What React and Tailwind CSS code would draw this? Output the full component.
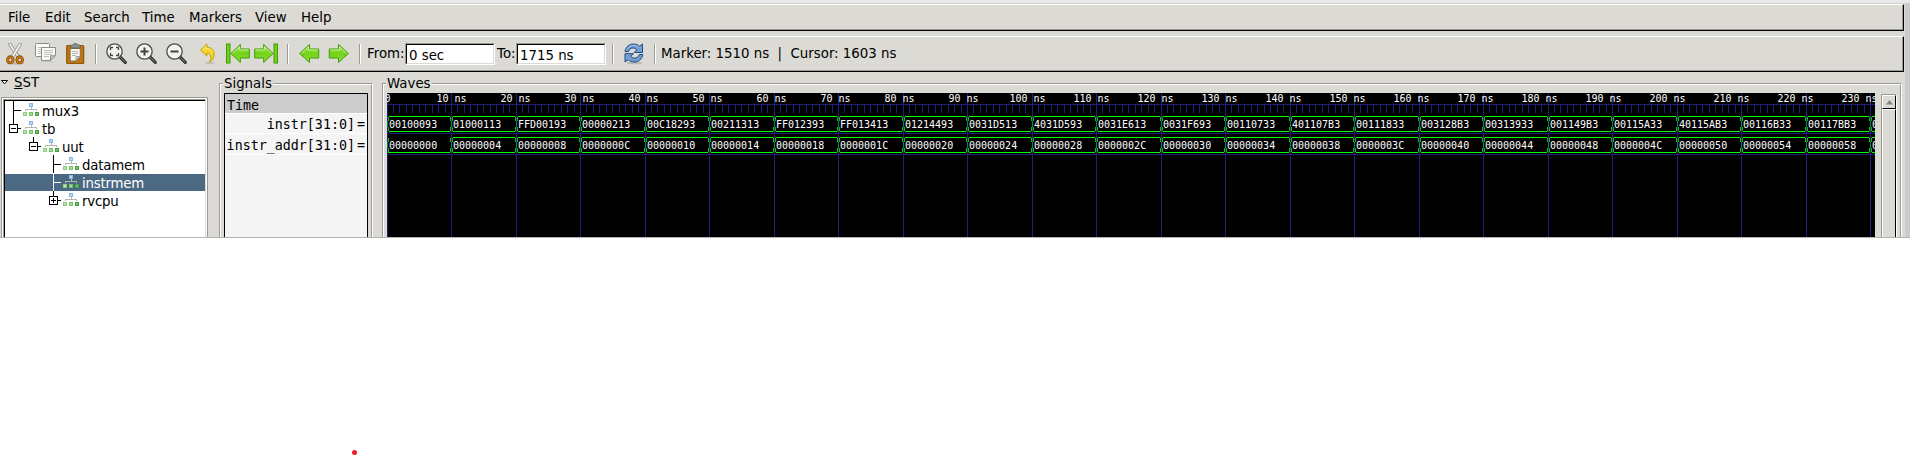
import React from "react";

const MENU = [
  ["File", "w-[37px]"],
  ["Edit", "w-[39px]"],
  ["Search", "w-[58px]"],
  ["Time", "w-[47px]"],
  ["Markers", "w-[66px]"],
  ["View", "w-[46px]"],
  ["Help", "w-[40px]"],
];

const INSTR = [
  "00100093", "01000113", "FFD00193", "00000213", "00C18293", "00211313",
  "FF012393", "FF013413", "01214493", "0031D513", "4031D593", "0031E613",
  "0031F693", "00110733", "401107B3", "00111833", "003128B3", "00313933",
  "001149B3", "00115A33", "40115AB3", "00116B33", "00117BB3", "0",
];
const ADDR = INSTR.map((_, i) => (i === 23 ? "0" : (i * 4).toString(16).toUpperCase().padStart(8, "0")));

const lineX = (k) => Math.floor(64.5 * k);

function Cut() {
  return (
    <svg width="20" height="22" viewBox="0 0 20 22" fill="none">
      <ellipse cx="10" cy="20.5" rx="9" ry="1.2" fill="#b9b8b2" />
      <path d="M4 1.5 L12.5 14" stroke="#8b8d88" strokeWidth="3.4" strokeLinecap="round" />
      <path d="M4 1.5 L12.5 14" stroke="#f4f4f2" strokeWidth="1.8" strokeLinecap="round" />
      <path d="M14 1.5 L6.5 14" stroke="#8b8d88" strokeWidth="3.4" strokeLinecap="round" />
      <path d="M14 1.5 L6.5 14" stroke="#f4f4f2" strokeWidth="1.8" strokeLinecap="round" />
      <ellipse cx="4.3" cy="16.8" rx="2.8" ry="3" stroke="#8f4f02" strokeWidth="3" />
      <ellipse cx="4.3" cy="16.8" rx="2.8" ry="3" stroke="#c97a1c" strokeWidth="1.3" />
      <ellipse cx="13.7" cy="16.8" rx="2.8" ry="3" stroke="#8f4f02" strokeWidth="3" />
      <ellipse cx="13.7" cy="16.8" rx="2.8" ry="3" stroke="#c97a1c" strokeWidth="1.3" />
    </svg>
  );
}

function Copy() {
  return (
    <svg width="22" height="22" viewBox="0 0 22 22" fill="none">
      <rect x="0.5" y="0.5" width="14" height="13" rx="0.8" fill="#fafafa" stroke="#8a8c87" />
      <path d="M3 4.5h9M3 6.5h9M3 8.5h4M3 10.5h3" stroke="#bfc0bc" />
      <path d="M6.5 4.5h14v8l-5 5h-9z" fill="#f8f8f7" stroke="#8a8c87" />
      <path d="M9 7.5h9M9 9.5h9M9 11.5h8M9 13.5h5" stroke="#bfc0bc" />
      <path d="M20 12.8l-4.5 4.5v-4.5z" fill="#d5d5d2" stroke="#8a8c87" />
      <path d="M7 18.8h12" stroke="#c4c3bd" />
    </svg>
  );
}

function Paste() {
  return (
    <svg width="20" height="22" viewBox="0 0 20 22" fill="none">
      <rect x="0.7" y="2.5" width="17" height="18" rx="1" fill="#bd7513" stroke="#8f5902" strokeWidth="1.2" />
      <path d="M4.2 5.5h10v8l-4 4.5h-6z" fill="#f7f7f6" stroke="#85612a" strokeWidth="0.8" />
      <path d="M14 13.5h-4v4.3z" fill="#c8c8c5" stroke="#8a8c87" strokeWidth="0.7" />
      <path d="M6 8.5h6M6 10.5h6M6 12.5h4" stroke="#b5b6b2" />
      <path d="M4.5 5V2.8q0-.8 1-.8h1.3Q7 .5 9.3.5T12 2h1.300q1 0 1 .8V5z" fill="#8d8f88" stroke="#5c5e59" strokeWidth="0.8" />
    </svg>
  );
}

function Magnifier({ kind }) {
  return (
    <svg width="22" height="22" viewBox="0 0 22 22" fill="none">
      <path d="M14 14L19.300 19.300" stroke="#2e3436" strokeWidth="3.200" strokeLinecap="round" />
      <path d="M14.500 14.500L19 19" stroke="#7d817f" strokeWidth="1" strokeLinecap="round" />
      <circle cx="8.500" cy="8.500" r="7.600" fill="#f1f1ef" stroke="#555753" strokeWidth="1.500" />
      <circle cx="8.500" cy="8.500" r="6.300" stroke="#ffffff" strokeWidth="0.9" />
      {kind === "in" && <path d="M4.500 8.500h8M8.500 4.500v8" stroke="#3f4341" strokeWidth="2" />}
      {kind === "out" && <path d="M4.500 8.500h8" stroke="#3f4341" strokeWidth="2" />}
      {kind === "fit" && (
        <path d="M4.500 7V4.500H7M10 4.500h2.500V7M12.500 10v2.500H10M7 12.500H4.500V10" stroke="#3f4341" strokeWidth="1.300" />
      )}
    </svg>
  );
}

function Undo() {
  return (
    <svg width="17" height="22" viewBox="-0.8 0 17 22" fill="none">
      <ellipse cx="10" cy="20" rx="5" ry="1.200" fill="#c3c2bb" />
      <path
        d="M0.800 7L7 1v3.300c5 0 7.400 3 7.400 7.200 0 3.500-2 6.300-4.800 7.500 1.200-1.700 1.600-3.200 1.500-5-.1-2.400-1.500-3.700-4.100-3.700V13z"
        fill="#f6d52c"
        stroke="#c4a000"
        strokeWidth="1"
        strokeLinejoin="round"
      />
      <path d="M2.500 7L6 3.700v1.700c4 0 6 1.500 7 4" stroke="#fff3a0" strokeWidth="0.800" />
    </svg>
  );
}

function Arrow({ dir = "left", bar = false }) {
  return (
    <svg
      width={bar ? 24 : 21}
      height="22"
      viewBox={bar ? "-4 0 24 22" : "0 0 21 22"}
      fill="none"
      className={dir === "right" ? "-scale-x-100" : ""}
    >
      <defs>
        <linearGradient id="greenFill" x1="0" y1="0" x2="0" y2="1">
          <stop offset="0" stopColor="#a9e866" />
          <stop offset="0.5" stopColor="#73d216" />
          <stop offset="1" stopColor="#8ee03c" />
        </linearGradient>
      </defs>
      {bar && <rect x="-3.500" y="1" width="3.500" height="19" fill="#73d216" stroke="#3f9a06" />}
      <path
        d={bar ? "M0.900 10.500L10.300 1.500V6H19.300v9h-9v4.500z" : "M0.700 10.500L10.500 1.500V6H19.700v9h-9.200v4.500z"}
        fill="url(#greenFill)"
        stroke="#3f9a06"
        strokeLinejoin="round"
      />
      <path d="M2.500 10.300L9.600 3.800V7h9" stroke="#cdf5a0" strokeWidth="0.900" />
    </svg>
  );
}

function Refresh() {
  return (
    <svg width="22" height="22" viewBox="0 0 22 22" fill="none">
      <ellipse cx="10.500" cy="20" rx="8" ry="1.300" fill="#b9b9b5" />
      <g fill="#729fcf" stroke="#204a87" strokeWidth="1" strokeLinejoin="round">
        <path d="M1 8.500C1.700 3.500 5.500 1 9.500 1c2.500 0 4.500.8 6 2.300L18.500 1v8.500H10.200l2.600-2.700C11.500 5.500 10.300 5 9 5 6.500 5 5 6.300 4.500 8.500z" />
        <path d="M18.800 11.500c-.8 5-4.500 7.500-8.500 7.500-2.500 0-4.500-.8-6-2.300L1 19v-8.300h8.500l-2.700 2.600c1.200 1.200 2.400 1.800 3.800 1.800 2.500 0 4-1.300 4.600-3.600z" />
      </g>
      <path d="M2.800 7C4 3.800 6.500 2.300 9.500 2.300c2.300 0 4 .8 5.500 2.400" stroke="#adc9ea" strokeWidth="0.800" />
    </svg>
  );
}

function Sep() {
  return <div className="h-5 w-[2px] shrink-0 border-l border-[#9c9a93] bg-white" />;
}

function Slot({ w, children }) {
  return <div className={`${w} flex h-[22px] shrink-0 items-center`}>{children}</div>;
}

function Label({ children }) {
  return <span className="pl-px pt-px">{children}</span>;
}

function Entry({ children }) {
  return (
    <div className="h-[22px] w-[90px] shrink-0 border border-b-white border-l-[#9c9a93] border-r-white border-t-[#9c9a93]">
      <div className="h-5 border border-b-[#dcdad5] border-l-black border-r-[#dcdad5] border-t-black bg-white pl-[2px] leading-[21px]">
        {children}
      </div>
    </div>
  );
}

function Bar({ size, children }) {
  return (
    <div className={`${size} w-[1904px] shrink-0 border-b border-r border-t border-b-black border-r-black border-t-white`}>
      <div className="flex h-full items-center border-b border-r border-[#9c9a93]">{children}</div>
    </div>
  );
}

function ModuleIcon() {
  return (
    <svg width="16" height="14" viewBox="0 0 16 14" shapeRendering="crispEdges">
      <path d="M2.500 8V6.500h11V8M8.500 4v3" stroke="#b4b6b2" fill="none" />
      <rect x="6" y="0" width="4" height="4" fill="#86b5ea" />
      <rect x="7" y="1" width="2" height="2" fill="#bcd8f6" />
      <rect x="0" y="9" width="4" height="4" fill="#8ccf7d" />
      <rect x="1" y="10" width="2" height="2" fill="#b5e3a8" />
      <rect x="6" y="9" width="4" height="4" fill="#74c168" />
      <rect x="7" y="10" width="2" height="2" fill="#a5dc98" />
      <rect x="12" y="9" width="4" height="4" fill="#46a043" />
      <rect x="13" y="10" width="2" height="2" fill="#74c168" />
    </svg>
  );
}

const TREE = [
  { name: "mux3", pad: "pl-[3px]", d: "M5.500 0v18M5.500 9.500h7" },
  { name: "tb", pad: "pl-[3px]", d: "M5.500 0v5M9.500 9.500h3M1.500 5.500h8v8h-8zM3 9.500h5" },
  { name: "uut", pad: "pl-[23px]", d: "M5.500 0v5M9.500 9.500h3M1.500 5.500h8v8h-8zM3 9.500h5" },
  { name: "datamem", pad: "pl-[43px]", d: "M5.500 0v18M5.500 9.500h7" },
  { name: "instrmem", pad: "pl-[43px]", d: "M5.500 0v18M5.500 9.500h7", selected: true },
  { name: "rvcpu", pad: "pl-[43px]", d: "M5.500 0v5M9.500 9.500h3M1.500 5.500h8v8h-8zM3 9.500h5M5.500 7v5" },
];

function Tree() {
  return (
    <div className="ml-px mt-[8px] h-[141px] w-[207px] border-x border-t border-[#9c9a93]">
      <div className="h-full border-x border-t border-white">
        <div className="h-full border-l border-t border-r border-l-[#9c9a93] border-r-[#dcdad5] border-t-[#9c9a93]">
          <div className="h-full border-l border-t border-black bg-white">
            {TREE.map((n) => (
              <div
                key={n.name}
                className={`h-[18px] border-t border-white ${n.selected ? "bg-[#4b6983] text-white" : "text-black"}`}
              >
                <div className={`${n.pad} -mt-px flex h-[18px]`}>
                  <svg width="15" height="18" viewBox="0 0 15 18" fill="none" stroke="currentColor" shapeRendering="crispEdges">
                    <path d={n.d} />
                  </svg>
                  <div className="pt-[2px]"><ModuleIcon /></div>
                  <span className="pl-[3px] leading-[21px] tracking-[-0.2px]">{n.name}</span>
                </div>
              </div>
            ))}
          </div>
        </div>
      </div>
    </div>
  );
}

function Frame({ title, size, children }) {
  return (
    <div className={`${size} mt-[11px] shrink-0 border-l border-r border-t border-l-[#9c9a93] border-r-white border-t-[#9c9a93]`}>
      <div className="h-full border-l border-r border-t border-l-white border-r-[#9c9a93] border-t-white">
        <div className="-mt-[10px] ml-[2px] h-[18px] w-fit bg-[#dcdad5] px-px leading-[18px]">{title}</div>
        {children}
      </div>
    </div>
  );
}

function Row({ y, values }) {
  return (
    <g>
      {values.map((v, k) => {
        const a = lineX(k);
        const b = lineX(k + 1);
        const zero = k === 0 && values === ADDR;
        return (
          <g key={k}>
            <path
              d={zero ? `M${a + 1} ${y + 15.5}H${b - 1}` : `M${a + 2} ${y + 0.5}H${b - 1}M${a + 2} ${y + 15.5}H${b - 1}`}
              stroke="#00ff00"
            />
            <path
              d={`M${a + 1.5} ${y + 1}v4M${a + 1.5} ${y + 11}v4M${b - 0.5} ${y + 1}v4M${b - 0.5} ${y + 11}v4`}
              stroke="#00c800"
            />
            <path d={`M${a + 0.5} ${y + 5}v6`} stroke="#008a50" />
            <text x={a + 2} y={y + 12} fill="#ffffff">{v}</text>
          </g>
        );
      })}
      <path d={`M0 ${y + 17.5}H1488`} stroke="#20207c" />
    </g>
  );
}

function Waves() {
  return (
    <svg
      width="1488"
      height="145"
      viewBox="0 0 1488 145"
      fill="none"
      shapeRendering="crispEdges"
      className="block shrink-0 bg-black font-['DejaVu_Sans_Mono',monospace] text-[10px]"
    >
      {Array.from({ length: 24 }, (_, k) => (
        <path key={k} d={`M${lineX(k) + 0.5} 0V145`} stroke="#20207c" />
      ))}
      <path d="M0 11.500H1488" stroke="#20207c" />
      {Array.from({ length: 231 }, (_, n) => (
        <path key={n} d={`M${Math.floor(n * 6.45) + 0.5} 12v8`} stroke="#20207c" />
      ))}
      {Array.from({ length: 24 }, (_, k) => (
        <text key={k} x={k * 64 + 0.5} y="9" textAnchor="middle" fill="#ffffff">
          {k === 0 ? "0" : `${k * 10} ns`}
        </text>
      ))}
      <Row y={23} values={INSTR} />
      <Row y={44} values={ADDR} />
    </svg>
  );
}

export default function App() {
  return (
    <div className="flex h-[456px] w-[1910px] flex-col overflow-hidden bg-white font-['DejaVu_Sans',sans-serif] text-[13.33px] text-black">
      <div className="h-[3px] shrink-0 bg-[#e8e8e8]" />
      <div className="flex h-[235px] shrink-0 overflow-hidden border-b border-[#b4b3af] bg-[#cccccc]">
        <div className="flex w-[1905px] flex-col border-t border-[#d2d1cd] bg-[#dcdad5]">
          <Bar size="h-[27px]">
            <div className="flex h-[24px] pl-[8px] leading-[25px]">
              {MENU.map(([m, w]) => (
                <span key={m} className={w}>{m}</span>
              ))}
            </div>
          </Bar>
          <div className="h-[5px] shrink-0" />
          <Bar size="h-[36px]">
            <div className="flex items-center whitespace-pre pl-[6px]">
              <Slot w="w-[29px]"><Cut /></Slot>
              <Slot w="w-[31px]"><Copy /></Slot>
              <Slot w="w-[29px]"><Paste /></Slot>
              <Slot w="w-[11px]"><Sep /></Slot>
              <Slot w="w-[30px]"><Magnifier kind="fit" /></Slot>
              <Slot w="w-[30px]"><Magnifier kind="in" /></Slot>
              <Slot w="w-[33px]"><Magnifier kind="out" /></Slot>
              <Slot w="w-[27px]"><Undo /></Slot>
              <Slot w="w-[28px]"><Arrow bar /></Slot>
              <Slot w="w-[33px]"><Arrow bar dir="right" /></Slot>
              <Slot w="w-[12px]"><Sep /></Slot>
              <Slot w="w-[29px]"><Arrow /></Slot>
              <Slot w="w-[31px]"><Arrow dir="right" /></Slot>
              <Slot w="w-[7px]"><Sep /></Slot>
              <Slot w="w-[39px]"><Label>From:</Label></Slot>
              <Slot w="w-[92px]"><Entry>0 sec</Entry></Slot>
              <Slot w="w-[19px]"><span className="pt-px">To:</span></Slot>
              <Slot w="w-[96px]"><Entry>1715 ns</Entry></Slot>
              <Slot w="w-[12px]"><Sep /></Slot>
              <Slot w="w-[30px]"><Refresh /></Slot>
              <Slot w="w-[6px]"><Sep /></Slot>
              <Slot w="w-[260px]"><Label>{"Marker: 1510 ns  |  Cursor: 1603 ns"}</Label></Slot>
            </div>
          </Bar>
          <div className="flex h-[166px] shrink-0">
            <div className="w-[219px] shrink-0 pt-px">
              <div className="flex h-[16px] items-center">
                <svg width="14" height="14" viewBox="0 0 14 14" fill="none" stroke="#000000">
                  <path d="M1.500 6.500h6L4.500 9.800z" fill="#ffffff" />
                </svg>
                <span className="pt-[4px] leading-[16px]"><span className="underline decoration-1 underline-offset-1">S</span>ST</span>
              </div>
              <Tree />
            </div>
            <Frame title="Signals" size="h-[155px] w-[154px]">
              <div className="ml-[3px] h-[146px] w-[144px] border-x border-t border-black bg-[#f4f4f4] font-['DejaVu_Sans_Mono',monospace]">
                <div className="h-[20px] border-b border-white bg-[#cccccc] pl-[2px] leading-[23px]">Time</div>
                <div className="flex h-[20px] justify-end border-b border-white leading-[21px]">
                  <span>instr[31:0]</span><span className="w-[12px] pl-[2px]">=</span>
                </div>
                <div className="flex h-[21px] justify-end border-b border-white leading-[23px]">
                  <span>instr_addr[31:0]</span><span className="w-[12px] pl-[2px]">=</span>
                </div>
              </div>
            </Frame>
            <div className="w-[9px] shrink-0" />
            <Frame title="Waves" size="h-[155px] w-[1520px]">
              <div className="flex pl-[3px]">
                <Waves />
                <div className="ml-[6px] mt-px h-[144px] w-[16px] border-l border-r border-t border-l-[#9c9a93] border-r-white border-t-[#9c9a93]">
                  <div className="flex h-[14px] items-center justify-center border border-b-black border-l-white border-r-black border-t-white">
                    <svg width="7" height="5" viewBox="0 0 7 5"><path d="M3.500 0L7 4.500H0z" fill="#85837c" /></svg>
                  </div>
                  <div className="h-[130px] border border-b-0 border-l-white border-r-black border-t-white" />
                </div>
              </div>
            </Frame>
          </div>
        </div>
      </div>
      <div className="flex pl-[352px] pt-[212px]">
        <div className="size-[5px] rounded-full bg-[#ee1c24]" />
      </div>
    </div>
  );
}
